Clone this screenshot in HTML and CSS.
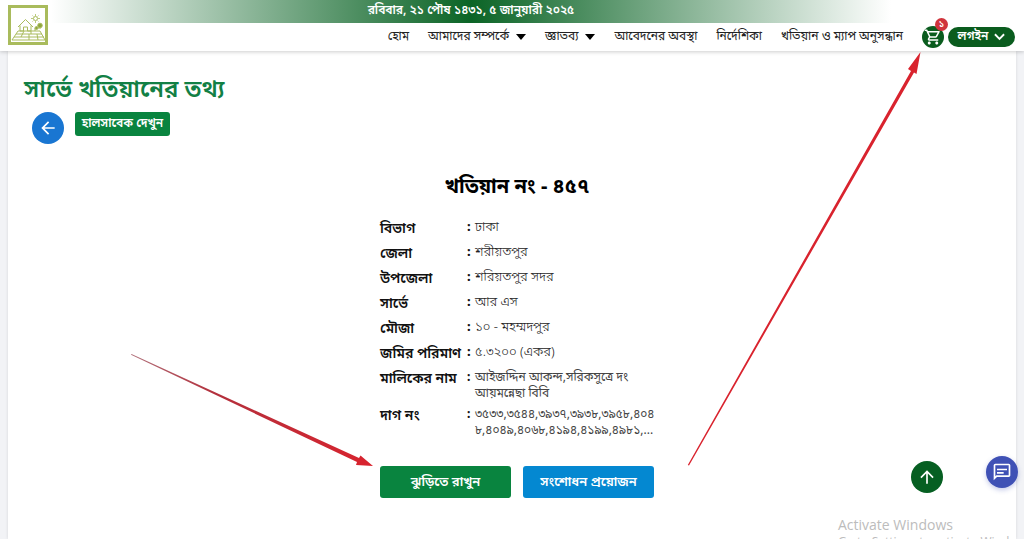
FILE: index.html
```html
<!DOCTYPE html>
<html lang="bn">
<head>
<meta charset="utf-8">
<meta name="viewport" content="width=device-width, initial-scale=1">
<title>সার্ভে খতিয়ানের তথ্য</title>
<link rel="stylesheet" href="styles.css">
</head>
<body>
<header class="header">
  <a class="logo" href="#" aria-label="হোম">
    <svg viewBox="0 0 40 40" fill="none" stroke="#a9bb5c">
      <rect x="1.5" y="1.5" width="37" height="37" stroke-width="3" fill="#fff"/>
      <path d="M10 22l7.500-7.500L25 22M12 20.500V26h3.500v-4h4v4H23v-5.500M4 35l6-9h22l5 9zM8 29h26M6 32h30M16 26l-3 6M23 26v3M21 29v6M29 29l1 6M27 26v-3h6" stroke-width="1"/>
      <circle cx="27.500" cy="13.500" r="2"/>
      <path d="M27.500 9v2M27.500 16v2M23 13.500h2M30 13.500h2M24.500 10.500l1 1M29.500 15.500l1 1M30.500 10.500l-1 1M25.500 15.500l-1 1" stroke-width=".8"/>
      <circle cx="32" cy="20.500" r="2.300" fill="#8fa63c"/><circle cx="28.500" cy="23" r="1.500" fill="#8fa63c"/>
    </svg>
  </a>
  <div class="date-bar">রবিবার, ২১ পৌষ ১৪৩১, ৫ জানুয়ারী ২০২৫</div>
  <div class="menu-row">
    <nav class="menu">
      <a href="#">হোম</a>
      <a href="#">আমাদের সম্পর্কে <span class="caret"></span></a>
      <a href="#">জ্ঞাতব্য <span class="caret"></span></a>
      <a href="#">আবেদনের অবস্থা</a>
      <a href="#">নির্দেশিকা</a>
      <a href="#">খতিয়ান ও ম্যাপ অনুসন্ধান</a>
    </nav>
    <button class="cart" type="button" aria-label="ঝুড়ি">
      <svg viewBox="0 0 24 24" width="18" height="18" fill="#fff"><path d="M15.550 13c.75 0 1.410-.41 1.750-1.030l3.580-6.490A.996.996 0 0 0 20.010 4H5.210l-.94-2H1v2h2l3.600 7.590-1.350 2.440C4.520 15.370 5.480 17 7 17h12v-2H7l1.100-2h7.450zM6.160 6h12.150l-2.760 5H8.530L6.160 6zM7 18c-1.100 0-1.990.9-1.990 2S5.900 22 7 22s2-.9 2-2-.9-2-2-2zm10 0c-1.100 0-1.990.9-1.990 2s.89 2 1.990 2 2-.9 2-2-.9-2-2-2z"/></svg>
      <span class="badge">১</span>
    </button>
    <button class="login" type="button">লগইন
      <svg viewBox="0 0 12 8" width="11" height="8" fill="none" stroke="#fff" stroke-width="2"><path d="M1 1l5 5 5-5"/></svg>
    </button>
  </div>
</header>

<main class="page">
  <h1 class="title">সার্ভে খতিয়ানের তথ্য</h1>
  <div class="tools">
    <button class="back" type="button" aria-label="ফিরে যান">
      <svg viewBox="0 0 24 24" width="20" height="20" fill="#fff"><path d="M20 11H7.830l5.590-5.590L12 4l-8 8 8 8 1.410-1.410L7.830 13H20v-2z"/></svg>
    </button>
    <button class="history" type="button">হালসাবেক দেখুন</button>
  </div>
  <section class="record">
    <h2 class="record-title">খতিয়ান নং - ৪৫৭</h2>
    <dl class="details">
      <dt>বিভাগ</dt><dd>ঢাকা</dd>
      <dt>জেলা</dt><dd>শরীয়তপুর</dd>
      <dt>উপজেলা</dt><dd>শরিয়তপুর সদর</dd>
      <dt>সার্ভে</dt><dd>আর এস</dd>
      <dt>মৌজা</dt><dd>১০ - মহম্মদপুর</dd>
      <dt>জমির পরিমাণ</dt><dd>৫.৩২০০ (একর)</dd>
      <dt>মালিকের নাম</dt><dd class="long">আইজদ্দিন আকন্দ,সরিকসুত্রে দং<br>আয়মন্নেছা বিবি</dd>
      <dt>দাগ নং</dt><dd class="long">৩৫৩৩,৩৫৪৪,৩৯৩৭,৩৯৩৮,৩৯৫৮,৪০৪<br>৮,৪০৪৯,৪০৬৮,৪১৯৪,৪১৯৯,৪৯৮১,...</dd>
    </dl>
    <div class="actions">
      <button class="action add" type="button">ঝুড়িতে রাখুন</button>
      <button class="action fix" type="button">সংশোধন প্রয়োজন</button>
    </div>
  </section>
</main>

<svg class="arrows" viewBox="0 0 1024 539" fill="#d9232e" aria-hidden="true">
  <defs>
    <linearGradient id="tail" x1="0" y1="0" x2="1" y2="1"><stop offset="0" stop-color="#b0707a"/><stop offset=".35" stop-color="#b3303c"/><stop offset="1" stop-color="#d9232e"/></linearGradient>
  </defs>
  <path fill="url(#tail)" d="M131 354.800L357 462l-1 3 17 1-12.500-10.500-1.500 2.500L131.500 354z"/>
  <path d="M687.800 465L911 71l-3-2L920.500 52l-4 22-2.500-1.500L689 465.500z"/>
</svg>

<button class="to-top" type="button" aria-label="উপরে যান">
  <svg viewBox="0 0 24 24" width="20" height="20" fill="#fff"><path d="M4 12l1.410 1.410L11 7.830V20h2V7.830l5.580 5.590L20 12l-8-8-8 8z"/></svg>
</button>
<button class="chat" type="button" aria-label="বার্তা">
  <svg viewBox="0 0 24 24" width="20" height="20" fill="#fff"><path d="M4 4h16v12H5.170L4 17.170V4m0-2c-1.100 0-1.990.9-1.990 2L2 22l4-4h14c1.100 0 2-.9 2-2V4c0-1.100-.9-2-2-2H4zm2 10h8v2H6v-2zm0-4h12v2H6V8z"/></svg>
</button>
<div class="watermark">
  <div class="watermark-title">Activate Windows</div>
  <div class="watermark-text">Go to Settings to activate Windows.</div>
</div>
</body>
</html>
```
FILE: styles.css
```css
* { box-sizing: border-box; }
body {
  margin: 0;
  height: 100vh;
  overflow: hidden;
  display: flex;
  flex-direction: column;
  position: relative;
  background: #f2f3f6;
  color: #111;
  font-family: "Noto Sans Bengali", "Noto Sans", "Open Sans", sans-serif;
  font-size: 12px;
}
button {
  border: 0;
  padding: 0;
  font-family: inherit;
  color: #fff;
  display: flex;
  align-items: center;
  justify-content: center;
}
.header {
  position: relative;
  z-index: 1;
  background: #fff;
  box-shadow: 0 1px 4px rgba(0, 0, 0, .2);
}
.logo {
  position: absolute;
  left: 8px;
  top: 5px;
  width: 40px;
  height: 40px;
}
.logo svg { display: block; }
.date-bar {
  height: 23px;
  padding-right: 82px;
  line-height: 22px;
  text-align: center;
  font-weight: 600;
  color: #fff;
  background: linear-gradient(90deg, #fff 5%, #0b6426 46%, #fff 87%);
}
.menu-row {
  display: flex;
  align-items: center;
  justify-content: flex-end;
  height: 28px;
  padding-right: 9px;
}
.menu {
  display: flex;
  gap: 19px;
  margin-right: 19px;
}
.menu a {
  display: flex;
  align-items: center;
  gap: 7px;
  color: #222;
  text-decoration: none;
}
.caret {
  border: 5px solid transparent;
  border-top: 6px solid #000;
  border-bottom: 0;
}
.cart {
  position: relative;
  width: 22px;
  height: 22px;
  margin-right: 4px;
  border-radius: 50%;
  background: #0a5c1e;
}
.badge {
  position: absolute;
  top: -8px;
  right: -4px;
  width: 13px;
  height: 13px;
  border-radius: 50%;
  background: #d0343c;
  font-size: 9px;
  font-weight: 600;
  line-height: 15px;
}
.login {
  gap: 6px;
  width: 67px;
  height: 20px;
  border-radius: 10px;
  background: #0a5c1e;
  font-size: 12px;
  font-weight: 600;
  line-height: 16px;
}
.page {
  flex: 1;
  margin: 0 8px;
  padding: 24px 16px 0;
  background: #fff;
  box-shadow: 0 0 3px rgba(0, 0, 0, .12);
}
.title {
  margin: 0;
  font-size: 24px;
  font-weight: 600;
  line-height: 32px;
  color: #128045;
}
.tools {
  display: flex;
  gap: 11px;
  margin: 5px 0 0 8px;
}
.back, .to-top, .chat {
  width: 32px;
  height: 32px;
  border-radius: 50%;
}
.back { background: #1976d2; }
.history {
  width: 95px;
  height: 24px;
  border-radius: 3px;
  background: #09843f;
  font-size: 12px;
  font-weight: 600;
}
.record {
  width: 274px;
  margin: 28px auto 0;
  margin-left: calc(50% - 132px);
}
.record-title {
  margin: 0;
  text-align: center;
  font-size: 20px;
  font-weight: 700;
  line-height: 32px;
  color: #000;
}
.details {
  display: grid;
  grid-template-columns: 87px 1fr;
  row-gap: 5px;
  margin: 16px 0 0;
}
.details dt {
  font-size: 14px;
  font-weight: 600;
  line-height: 20px;
  white-space: nowrap;
}
.details dd {
  position: relative;
  margin: 0;
  padding-left: 8px;
  font-size: 13px;
  font-weight: 300;
  line-height: 16px;
  white-space: nowrap;
  color: #222;
}
.details .long {
  font-size: 12px;
  font-weight: 400;
  color: #444;
}
.details dd::before {
  content: ":";
  position: absolute;
  left: 0;
  font-weight: 700;
  color: #111;
}
.actions {
  display: flex;
  gap: 12px;
  margin-top: 27px;
}
.action {
  flex: 1;
  height: 32px;
  border-radius: 3px;
  font-size: 13px;
  font-weight: 600;
}
.add { background: #09843f; }
.fix { background: #0488d1; }
.arrows {
  position: absolute;
  z-index: 2;
  inset: 0;
  width: 100%;
  pointer-events: none;
}
.to-top {
  position: absolute;
  right: 81px;
  bottom: 46px;
  background: #065f22;
}
.chat {
  position: absolute;
  right: 6px;
  bottom: 51px;
  background: #3f51b5;
  box-shadow: 0 2px 5px rgba(63, 81, 181, .3);
}
.watermark {
  position: absolute;
  left: 838px;
  top: 515px;
  white-space: nowrap;
  font-family: "Open Sans", sans-serif;
  color: #bcbcbc;
}
.watermark-title {
  font-size: 14px;
  line-height: 20px;
}
.watermark-text {
  font-size: 12px;
  line-height: 14px;
}
```
